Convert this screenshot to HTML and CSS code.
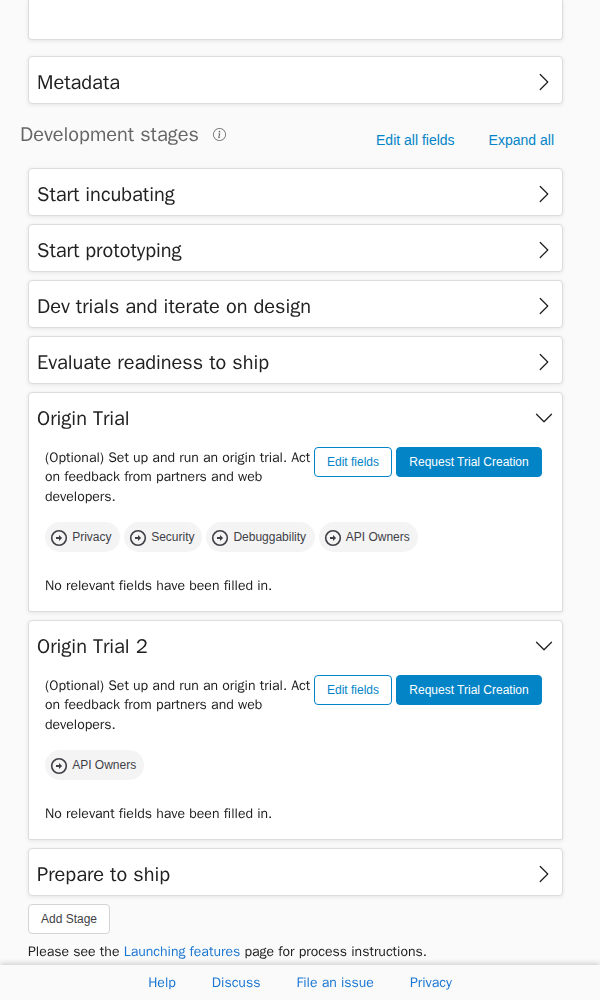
FILE: index.html
```html
<!DOCTYPE html>
<html lang="en">
<head>
<meta charset="utf-8">
<title>Feature stages</title>
<link rel="stylesheet" href="styles.css">
</head>
<body>
<svg class="defs" aria-hidden="true">
  <symbol id="chevron" viewBox="0 0 16 16"><path fill-rule="evenodd" d="M4.646 1.646a.5.5 0 0 1 .708 0l6 6a.5.5 0 0 1 0 .708l-6 6a.5.5 0 0 1-.708-.708L10.293 8 4.646 2.354a.5.5 0 0 1 0-.708z"/></symbol>
  <symbol id="info" viewBox="0 0 16 16"><path d="M8 15A7 7 0 1 1 8 1a7 7 0 0 1 0 14zm0 1A8 8 0 1 0 8 0a8 8 0 0 0 0 16z"/><path d="m8.930 6.588-2.290.287-.082.380.450.083c.294.070.352.176.288.469l-.738 3.468c-.194.897.105 1.319.808 1.319.545 0 1.178-.252 1.465-.598l.088-.416c-.200.176-.492.246-.686.246-.275 0-.375-.193-.304-.533L8.930 6.588zM9 4.500a1 1 0 1 1-2 0 1 1 0 0 1 2 0z"/></symbol>
  <symbol id="arrow" viewBox="0 0 18 18"><circle cx="9" cy="9" r="7.300" fill="none" stroke="currentColor" stroke-width="1.600"/><path d="M6 8.100h3V5.900L12.100 9 9 12.100V9.900H6z"/></symbol>
</svg>
<main class="page">
  <section class="card card-top"></section>
  <section class="card card-meta"><h2 class="summary">Metadata<svg class="chev"><use href="#chevron"/></svg></h2></section>
  <header class="stages-head">
    <h2 class="stages-title">Development stages</h2>
    <svg class="info"><use href="#info"/></svg>
    <nav class="stage-actions"><a>Edit all fields</a><a>Expand all</a></nav>
  </header>
  <section class="card"><h2 class="summary">Start incubating<svg class="chev"><use href="#chevron"/></svg></h2></section>
  <section class="card"><h2 class="summary">Start prototyping<svg class="chev"><use href="#chevron"/></svg></h2></section>
  <section class="card"><h2 class="summary">Dev trials and iterate on design<svg class="chev"><use href="#chevron"/></svg></h2></section>
  <section class="card"><h2 class="summary">Evaluate readiness to ship<svg class="chev"><use href="#chevron"/></svg></h2></section>
  <section class="card card-open">
    <h2 class="summary">Origin Trial<svg class="chev chev-down"><use href="#chevron"/></svg></h2>
    <div class="body">
      <div class="intro">
        <p class="desc">(Optional) Set up and run an origin trial. Act<br>on feedback from partners and web<br>developers.</p>
        <button class="btn btn-edit">Edit fields</button><button class="btn btn-primary">Request Trial Creation</button>
      </div>
      <div class="gates">
        <span class="gate g1"><svg class="arrow"><use href="#arrow"/></svg>Privacy</span>
        <span class="gate g2"><svg class="arrow"><use href="#arrow"/></svg>Security</span>
        <span class="gate g3"><svg class="arrow"><use href="#arrow"/></svg>Debuggability</span>
        <span class="gate g4"><svg class="arrow"><use href="#arrow"/></svg>API Owners</span>
      </div>
      <p class="empty">No relevant fields have been filled in.</p>
    </div>
  </section>
  <section class="card card-open">
    <h2 class="summary">Origin Trial 2<svg class="chev chev-down"><use href="#chevron"/></svg></h2>
    <div class="body">
      <div class="intro">
        <p class="desc">(Optional) Set up and run an origin trial. Act<br>on feedback from partners and web<br>developers.</p>
        <button class="btn btn-edit">Edit fields</button><button class="btn btn-primary">Request Trial Creation</button>
      </div>
      <div class="gates">
        <span class="gate g4"><svg class="arrow"><use href="#arrow"/></svg>API Owners</span>
      </div>
      <p class="empty">No relevant fields have been filled in.</p>
    </div>
  </section>
  <section class="card"><h2 class="summary">Prepare to ship<svg class="chev"><use href="#chevron"/></svg></h2></section>
  <button class="btn btn-add">Add Stage</button>
  <p class="process">Please see the <a>Launching features</a> page for process instructions.</p>
</main>
<footer class="footer"><a>Help</a><a>Discuss</a><a>File an issue</a><a>Privacy</a></footer>
</body>
</html>
```

FILE: styles.css
```css
* { box-sizing: border-box; }
body {
  margin: 0;
  height: 1000px;
  overflow: hidden;
  display: flex;
  flex-direction: column;
  background: #fafafa;
  color: #212121;
  font: 14px/19.6px "WenQuanYi Zen Hei", "Liberation Sans", Arial, sans-serif;
}
h2, p { margin: 0; font-weight: 400; }
svg { fill: currentColor; flex: none; }
.defs { display: none; }
.page { height: 965px; padding: 0 37px 0 28px; flex: none; }
.card {
  height: 48px;
  margin-bottom: 8px;
  background: #fff;
  border: 1px solid #dadce0;
  border-radius: 4px;
  box-shadow: 0 1px 4px rgba(0, 0, 0, .09);
}
.card-top { height: 40px; margin-bottom: 16px; border-top: 0; border-radius: 0 0 4px 4px; }
.card-meta { margin-bottom: 0; }
.card-open { height: 220px; border-radius: 4px 4px 2px 2px; }
.summary {
  display: flex;
  align-items: center;
  justify-content: space-between;
  height: 50px;
  padding: 0 8px;
  font-size: 20px;
  line-height: 32px;
}
.summary { line-height: 31px; }
.chev { width: 20px; height: 20px; }
.chev-down { transform: rotate(90deg); }
.stages-head { display: flex; height: 64px; margin-left: -8px; color: #666; }
.stages-title { width: 193px; padding-top: 16px; font-size: 20px; line-height: 30px; white-space: nowrap; }
.info { width: 13px; height: 13px; margin-top: 24px; }
.stage-actions {
  display: flex;
  gap: 34px;
  margin-left: auto;
  padding: 26px 9px 0 0;
  color: #0284c7;
  font: 14px/20px "Liberation Sans", Arial, sans-serif;
}
.body { padding: 4px 20px 0 16px; }
.intro { display: flex; height: 75px; }
.desc { width: 269px; flex: none; padding-top: .6px; line-height: 19.5px; white-space: nowrap; }
.btn {
  height: 30px;
  padding: 0;
  border: 1px solid #0284c7;
  border-radius: 4px;
  font: 12px/28px "Liberation Sans", Arial, sans-serif;
  white-space: nowrap;
}
.btn-edit { width: 78px; margin-right: 4px; background: #fff; color: #0284c7; }
.btn-primary { width: 146px; background: #0284c7; color: #fff; }
.gates { display: flex; gap: 4px; height: 54px; }
.gate {
  display: flex;
  align-items: center;
  height: 30px;
  padding-left: 5px;
  border-radius: 15px;
  background: #f4f4f5;
  color: #3f3f46;
  font: 12px/30px "Liberation Sans", Arial, sans-serif;
}
.arrow { width: 18px; height: 18px; margin: 1px 4.200px 0 0; }
.g1 { width: 75px; }
.g2 { width: 78.200px; }
.g3 { width: 108.400px; }
.g4 { width: 99px; }
.btn-add { display: block; width: 82px; border-color: #d4d4d8; background: #fff; color: #3f3f46; }
.process { padding-top: 8px; white-space: nowrap; }
.process a, .footer a { color: #1976d2; }
.footer {
  display: flex;
  justify-content: center;
  gap: 36px;
  height: 35px;
  flex: none;
  background: #fafafa;
  box-shadow: 0 -2px 5px rgba(0, 0, 0, .16);
  line-height: 35px;
  z-index: 1;
}
```
